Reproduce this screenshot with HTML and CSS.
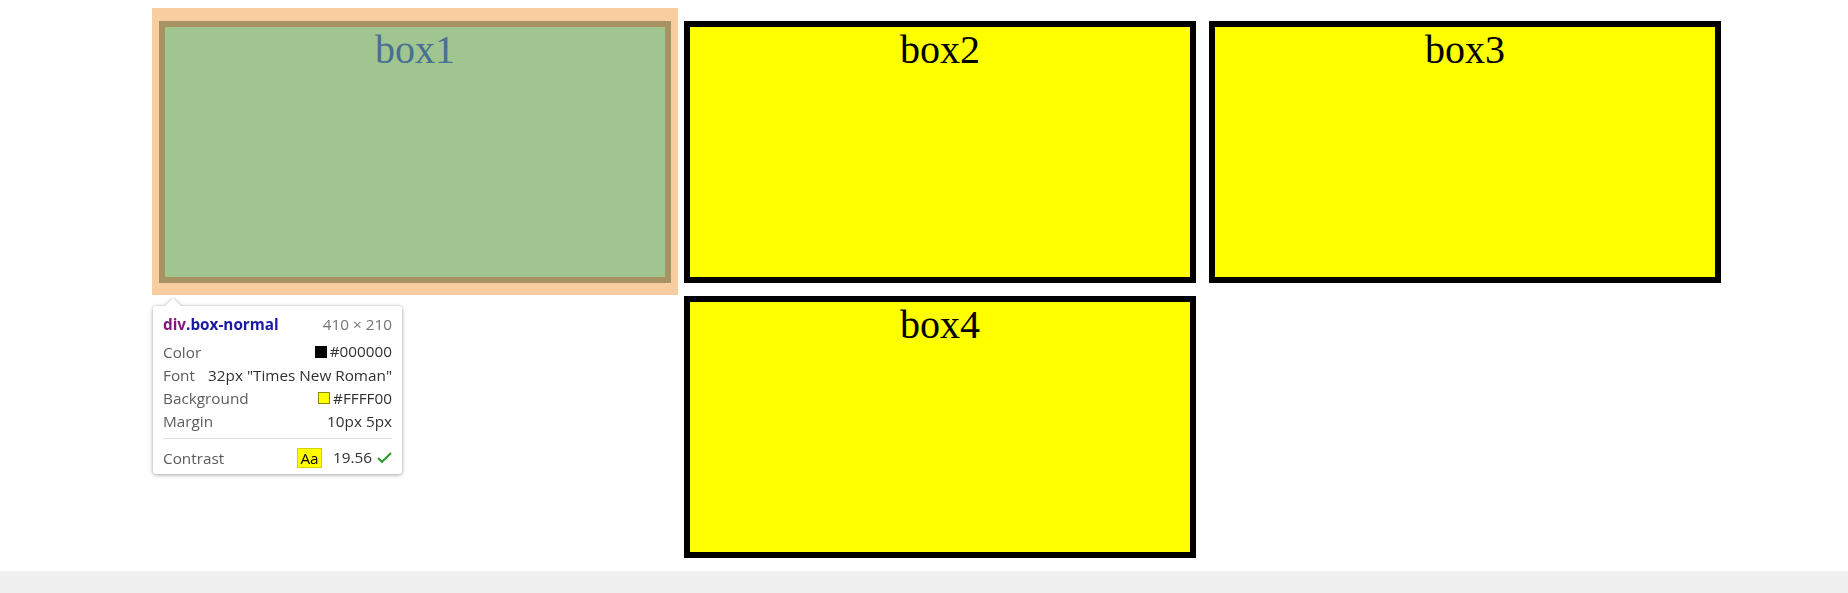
FILE: index.html
```html
<!DOCTYPE html>
<html>
<head>
<meta charset="utf-8">
<link rel="stylesheet" href="styles.css">
</head>
<body>
<div class="page">
  <div class="stage">
    <div class="box box-hl">box1</div>
    <div class="box">box2</div>
    <div class="box">box3</div>
    <div class="box">box4</div>
  </div>
  <div class="tip">
    <div class="row head">
      <span class="sel"><span class="tag">div</span><span class="cls">.box-normal</span></span>
      <span class="dim">410 × 210</span>
    </div>
    <div class="row"><span class="k">Color</span><span class="v"><i class="sw sw-black"></i>#000000</span></div>
    <div class="row"><span class="k">Font</span><span class="v">32px "Times New Roman"</span></div>
    <div class="row"><span class="k">Background</span><span class="v"><i class="sw sw-yellow"></i>#FFFF00</span></div>
    <div class="row"><span class="k">Margin</span><span class="v">10px 5px</span></div>
    <div class="sep"></div>
    <div class="row"><span class="k">Contrast</span><span class="v"><span class="aa">Aa</span><span class="ratio">19.56</span><svg class="check" width="15" height="12" viewBox="0 0 15 12"><polyline points="1,6 5,10 14,1" fill="none" stroke="#1e9a1e" stroke-width="1.8"/></svg></span></div>
  </div>
</div>
<div class="hbar"></div>
</body>
</html>
```
FILE: styles.css
```css
* { box-sizing: border-box; }
html { margin: 0; padding: 0; background: #fff; }
body { margin: 0; padding: 0; background: transparent; width: 1848px; height: 593px; overflow: hidden; display: flex; flex-direction: column; }
.page { position: relative; height: 571px; flex: none; }
.stage {
  width: 1575px;
  margin-left: 152px;
  padding-top: 8px;
  display: flex;
  flex-wrap: wrap;
  justify-content: center;
}
.box {
  width: 512px;
  height: 262px;
  margin: 13px 6px 0 7px;
  border: 6px solid #000;
  background: #ffff00;
  color: #000;
  font: 40px/46px "Liberation Serif", "Times New Roman", serif;
  text-align: center;
  position: relative;
}
.box-hl {
  background: #a1c591;
  border-color: #a89262;
  color: #496f91;
}
.box-hl::before {
  content: "";
  position: absolute;
  left: -13px;
  right: -13px;
  top: -19px;
  bottom: -18px;
  background: #f8cd9f;
  z-index: -1;
}
.hbar { height: 22px; background: #f0f0f0; flex: none; }

.tip {
  position: absolute;
  left: 153px;
  top: 306px;
  width: 249px;
  height: 168px;
  background: #fff;
  border-radius: 3px;
  filter: drop-shadow(0 1px 2px rgba(0,0,0,0.28)) drop-shadow(0 0 1px rgba(0,0,0,0.15));
  padding: 7px 10px 0;
  font-family: "Open Sans", "Noto Sans", sans-serif;
  font-size: 15.3px;
  line-height: 23px;
  color: #303030;
}
.tip::before {
  content: "";
  position: absolute;
  left: 12px;
  top: -8px;
  border-left: 8px solid transparent;
  border-right: 8px solid transparent;
  border-bottom: 8px solid #fff;
}
.row { display: flex; justify-content: space-between; align-items: baseline; white-space: nowrap; }
.head { margin-bottom: 4px; }
.sel { font-weight: 700; }
.tag { color: #881280; }
.cls { color: #1a1aa6; }
.dim { color: #737373; }
.k { color: #5c5c5c; }
.v { color: #303030; display: flex; align-items: center; }
.sw { display: inline-block; width: 12px; height: 12px; margin-right: 3px; border: 1px solid #777; }
.sw-black { background: #000; border-color: #000; }
.sw-yellow { background: #ffff00; border-color: #8a8a00; }
.sep { height: 1px; background: #e0e0e0; margin: 5px 0 7px; }
.aa {
  display: inline-block;
  width: 25px;
  height: 20px;
  line-height: 18px;
  text-align: center;
  background: #ffff00;
  border: 1px solid #d4d400;
  color: #000;
  margin-right: 11px;
}
.ratio { margin-right: 5px; }
.check { display: block; }
```
